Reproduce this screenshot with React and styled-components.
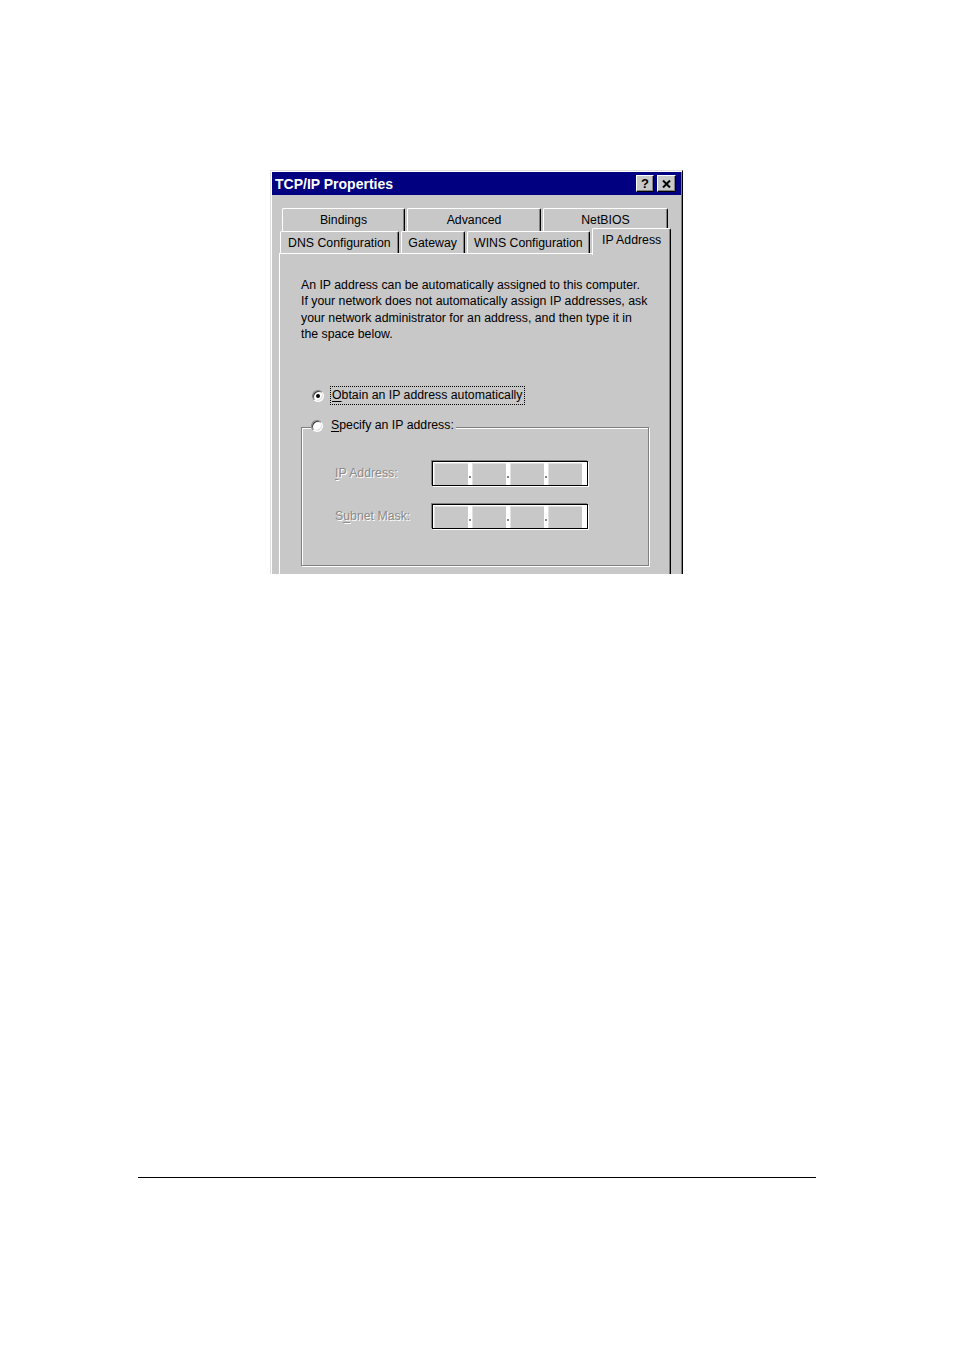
import React from 'react'
import styled, { createGlobalStyle } from 'styled-components'

const GlobalStyle = createGlobalStyle`
    body {
        margin: 0;
        background: #fff;
        font-family: "Liberation Sans", Arial, sans-serif;
    }
`

const face = '#c8c8c8'

const Page = styled.div`
    width: 954px;
    padding-top: 170px;
`

const Window = styled.div`
    margin-left: 270px;
    width: 413px;
    height: 404px;
    box-sizing: border-box;
    overflow: hidden;
    background: ${face};
    border: 1px solid;
    border-color: #dfdfdf #000 transparent #dfdfdf;
    border-bottom: none;
    box-shadow: inset 1px 1px #fff, inset -1px 0 #808080;
    padding: 1px 1px 0 1px;
`

const TitleBar = styled.div`
    height: 23px;
    background: #000080;
    display: flex;
    align-items: center;
    padding: 0 5px 0 3px;
`

const Title = styled.div`
    flex: 1;
    color: #fff;
    font-weight: bold;
    font-size: 14px;
`

const CaptionButton = styled.div`
    width: ${props => props.w || 18}px;
    height: 17px;
    box-sizing: border-box;
    margin-left: ${props => props.gap || 0}px;
    background: ${face};
    border: 1px solid;
    border-color: #fff #000 #000 #fff;
    box-shadow: inset -1px -1px #808080;
    display: flex;
    align-items: center;
    justify-content: center;
    font-weight: bold;
    font-size: 13px;
    color: #000;
`

const Body = styled.div`
    padding: 13px 10px 0 7px;
`

const TabRow = styled.div`
    display: flex;
    height: ${props => props.h}px;
    padding-left: ${props => props.indent}px;
    align-items: flex-end;
`

const Tab = styled.div`
    position: relative;
    z-index: ${props => props.selected ? 2 : 0};
    width: ${props => props.w}px;
    height: ${props => props.selected ? 27 : props.h}px;
    margin-left: ${props => props.gap}px;
    margin-bottom: ${props => props.selected ? -2 : 0}px;
    box-sizing: border-box;
    background: ${face};
    border-top: 1px solid #fff;
    border-left: 1px solid #fff;
    border-right: 1px solid #000;
    border-radius: 2px 2px 0 0;
    box-shadow: inset -1px 0 #808080;
    display: flex;
    align-items: center;
    justify-content: center;
    padding-bottom: ${props => props.selected ? 4 : 0}px;
    font-size: 12.3px;
    color: #000;
`

const Panel = styled.div`
    position: relative;
    z-index: 1;
    height: 340px;
    box-sizing: border-box;
    border-top: 1px solid #fff;
    border-left: 1px solid #fff;
    border-right: 1px solid #000;
    box-shadow: inset -1px 0 #808080;
    padding: 23px 0 0 21px;
`

const Intro = styled.p`
    margin: 0;
    font-size: 12.3px;
    line-height: 16.4px;
    color: #000;
`

const RadioRow = styled.div`
    display: flex;
    width: max-content;
    align-items: center;
    height: 16px;
    margin-left: ${props => props.indent}px;
    margin-top: ${props => props.top || 0}px;
    padding: 0 1px 0 0;
    background: ${face};
    font-size: 12.3px;
    color: #000;
`

const Radio = styled.span`
    position: relative;
    width: 12px;
    height: 12px;
    box-sizing: border-box;
    border-radius: 50%;
    background: #fff;
    border: 1px solid;
    border-color: #808080 #fff #fff #808080;
    box-shadow: inset 1px 1px #404040, inset -1px -1px #dfdfdf;
    margin-right: 7px;
    flex-shrink: 0;

    &::after {
        content: '';
        display: ${props => props.checked ? 'block' : 'none'};
        position: absolute;
        left: 3px;
        top: 3px;
        width: 4px;
        height: 4px;
        border-radius: 50%;
        background: #000;
    }
`

const RadioLabel = styled.span`
    padding: 1px 1px;
    outline: ${props => props.focused ? '1px dotted #000' : 'none'};
    line-height: 15px;
`

const Key = styled.span`
    text-decoration: underline;
    text-underline-offset: 2px;
`

const GroupBox = styled.div`
    width: 348px;
    height: 139px;
    box-sizing: border-box;
    margin-top: 23px;
    border: 1px solid #808080;
    box-shadow: inset 1px 1px #fff, 1px 1px #fff;
`

const Legend = styled.div`
    display: flex;
    margin-top: -10px;
`

const Fields = styled.div`
    display: flex;
    flex-direction: column;
    gap: 18px;
    padding: 27px 0 0 33px;
`

const FieldRow = styled.div`
    display: flex;
    align-items: center;
`

const FieldLabel = styled.span`
    width: 97px;
    font-size: 12.3px;
    color: #8a8a8a;
    text-shadow: 1px 1px #fff;
`

const IpBox = styled.div`
    width: 156px;
    height: 25px;
    box-sizing: border-box;
    border: 1px solid #000;
    box-shadow: -1px -1px #808080, 1px 1px #fff;
    display: flex;
    padding: 1px 0 0 1px;
    background: #fff;
`

const Octet = styled.div`
    width: 34px;
    height: 100%;
    background: ${face};
    box-shadow: inset 1px 1px #e0e0e0;
`

const Dot = styled.div`
    width: 4px;
    height: 100%;
    background: #fff;
    display: flex;
    align-items: flex-end;
    justify-content: center;
    padding-bottom: 7px;
    box-sizing: border-box;

    &::after {
        content: '';
        width: 2px;
        height: 2px;
        background: ${props => props.last ? 'transparent' : '#808080'};
    }
`

const Rule = styled.div`
    margin: 603px 0 0 138px;
    width: 678px;
    border-top: 1.3px solid #000;
`

function IpField() {
    return (
        <IpBox>
            {[0, 1, 2, 3].map(i => (
                <React.Fragment key={i}>
                    <Octet />
                    <Dot last={i === 3} />
                </React.Fragment>
            ))}
        </IpBox>
    )
}

function CloseGlyph() {
    return (
        <svg width="9" height="8" viewBox="0 0 9 8">
            <path d="M1 0.5 L8 7.5 M8 0.5 L1 7.5" stroke="#000" strokeWidth="2" />
        </svg>
    )
}

export default function App() {
    return (
        <Page>
            <GlobalStyle />
            <Window>
                <TitleBar>
                    <Title>TCP/IP Properties</Title>
                    <CaptionButton>?</CaptionButton>
                    <CaptionButton w={19} gap={3}><CloseGlyph /></CaptionButton>
                </TitleBar>
                <Body>
                    <TabRow h={23} indent={3}>
                        <Tab w={123} h={23} gap={0}>Bindings</Tab>
                        <Tab w={134} h={23} gap={2}>Advanced</Tab>
                        <Tab w={125} h={23} gap={2}>NetBIOS</Tab>
                    </TabRow>
                    <TabRow h={22} indent={1}>
                        <Tab w={119} h={22} gap={0}>DNS Configuration</Tab>
                        <Tab w={64} h={22} gap={2}>Gateway</Tab>
                        <Tab w={124} h={22} gap={2}>WINS Configuration</Tab>
                        <Tab w={79} h={22} gap={2} selected>IP Address</Tab>
                    </TabRow>
                    <Panel>
                        <Intro>
                            An IP address can be automatically assigned to this computer.<br />
                            If your network does not automatically assign IP addresses, ask<br />
                            your network administrator for an address, and then type it in<br />
                            the space below.
                        </Intro>
                        <RadioRow indent={11} top={45}>
                            <Radio checked />
                            <RadioLabel focused><Key>O</Key>btain an IP address automatically</RadioLabel>
                        </RadioRow>
                        <GroupBox>
                            <Legend>
                                <RadioRow indent={9}>
                                    <Radio />
                                    <RadioLabel><Key>S</Key>pecify an IP address:</RadioLabel>
                                </RadioRow>
                            </Legend>
                            <Fields>
                                <FieldRow>
                                    <FieldLabel><Key>I</Key>P Address:</FieldLabel>
                                    <IpField />
                                </FieldRow>
                                <FieldRow>
                                    <FieldLabel>S<Key>u</Key>bnet Mask:</FieldLabel>
                                    <IpField />
                                </FieldRow>
                            </Fields>
                        </GroupBox>
                    </Panel>
                </Body>
            </Window>
            <Rule />
        </Page>
    )
}
